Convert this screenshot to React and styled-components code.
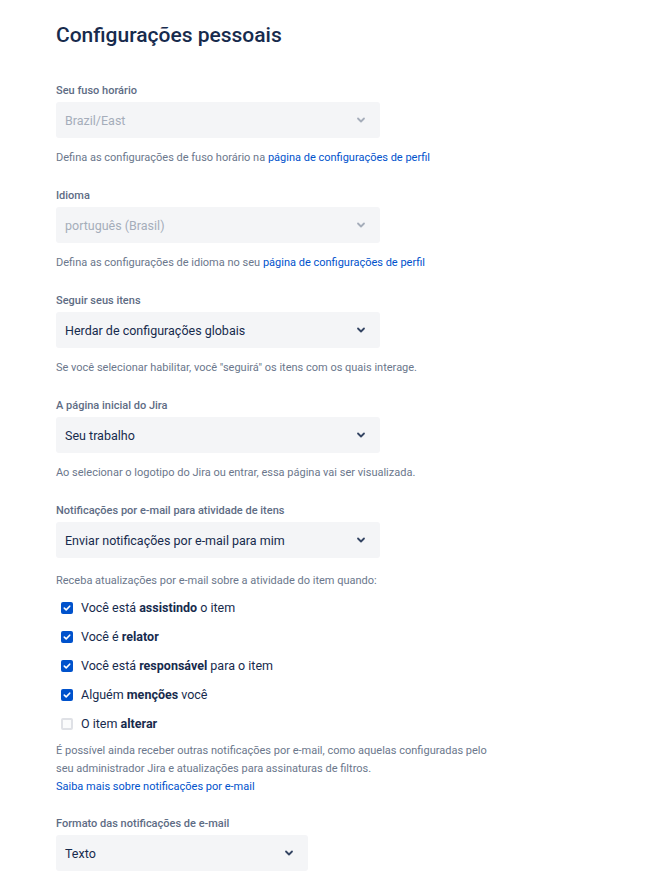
import React from "react";
import styled, { createGlobalStyle } from "styled-components";

const Global = createGlobalStyle`
  html, body { margin: 0; padding: 0; background: #fff; }
  body { font-family: Roboto, "Segoe UI", sans-serif; color: #172B4D; }
`;

const Page = styled.div`
  padding: 20px 56px 18px 56px;
  width: 436px;
`;

const Title = styled.h1`
  margin: 0 0 33px 0;
  font-size: 21px;
  line-height: 30px;
  font-weight: 500;
  color: #172B4D;
`;

const Field = styled.div`
  display: flex;
  flex-direction: column;
  margin-bottom: ${(p) => p.$mb ?? 21}px;
`;

const Label = styled.label`
  font-size: 11px;
  line-height: 16px;
  font-weight: 500;
  color: #5E6C84;
  margin-bottom: 3px;
`;

const SelectBox = styled.div`
  box-sizing: border-box;
  width: ${(p) => p.$w}px;
  height: 36px;
  background: #F4F5F7;
  border-radius: 3px;
  display: flex;
  align-items: center;
  justify-content: space-between;
  padding: 0 14px 0 9px;
  font-size: 12.5px;
  color: ${(p) => (p.$disabled ? "#A5ADBA" : "#172B4D")};
`;

const Helper = styled.div`
  font-size: 11px;
  line-height: 18px;
  color: #6B778C;
  margin-top: ${(p) => p.$mt ?? 11}px;
`;

const Link = styled.a`
  color: #0052CC;
  text-decoration: none;
`;

const CheckList = styled.div`
  display: flex;
  flex-direction: column;
  margin-top: 3px;
`;

const CheckRow = styled.div`
  display: flex;
  align-items: center;
  height: 29px;
  padding-left: 5px;
  font-size: 12.5px;
  color: #172B4D;
  b { font-weight: 700; }
`;

const Box = styled.span`
  box-sizing: border-box;
  width: 12px;
  height: 12px;
  border-radius: 2px;
  margin-right: 8px;
  display: inline-flex;
  align-items: center;
  justify-content: center;
  background: ${(p) => (p.$on ? "#0052CC" : "#FAFBFC")};
  border: ${(p) => (p.$on ? "none" : "2px solid #DFE1E6")};
`;

const Para = styled.div`
  font-size: 11px;
  line-height: 18px;
  color: #6B778C;
  margin-top: 4px;
  margin-bottom: 20px;
`;

const Chevron = ({ disabled }) => (
  <svg width="10" height="10" viewBox="0 0 10 10">
    <path
      d="M2 3.5 L5 6.5 L8 3.5"
      fill="none"
      stroke={disabled ? "#A5ADBA" : "#344563"}
      strokeWidth="1.8"
      strokeLinecap="round"
      strokeLinejoin="round"
    />
  </svg>
);

const Select = ({ value, disabled, w = 324 }) => (
  <SelectBox $disabled={disabled} $w={w}>
    <span>{value}</span>
    <Chevron disabled={disabled} />
  </SelectBox>
);

const Check = ({ on, children }) => (
  <CheckRow>
    <Box $on={on}>
      {on && (
        <svg width="8" height="8" viewBox="0 0 8 8">
          <path d="M1.3 4.1 L3.2 5.9 L6.7 2.2" fill="none" stroke="#fff" strokeWidth="1.6" strokeLinecap="round" strokeLinejoin="round" />
        </svg>
      )}
    </Box>
    <span>{children}</span>
  </CheckRow>
);

export default function App() {
  return (
    <>
      <Global />
      <Page>
        <Title>Configurações pessoais</Title>

        <Field>
          <Label>Seu fuso horário</Label>
          <Select value="Brazil/East" disabled />
          <Helper>
            Defina as configurações de fuso horário na <Link>página de configurações de perfil</Link>
          </Helper>
        </Field>

        <Field>
          <Label>Idioma</Label>
          <Select value="português (Brasil)" disabled />
          <Helper>
            Defina as configurações de idioma no seu <Link>página de configurações de perfil</Link>
          </Helper>
        </Field>

        <Field>
          <Label>Seguir seus itens</Label>
          <Select value="Herdar de configurações globais" />
          <Helper>Se você selecionar habilitar, você "seguirá" os itens com os quais interage.</Helper>
        </Field>

        <Field>
          <Label>A página inicial do Jira</Label>
          <Select value="Seu trabalho" />
          <Helper>Ao selecionar o logotipo do Jira ou entrar, essa página vai ser visualizada.</Helper>
        </Field>

        <Field $mb={0}>
          <Label>Notificações por e-mail para atividade de itens</Label>
          <Select value="Enviar notificações por e-mail para mim" />
          <Helper $mt={14}>Receba atualizações por e-mail sobre a atividade do item quando:</Helper>
          <CheckList>
            <Check on>Você está <b>assistindo</b> o item</Check>
            <Check on>Você é <b>relator</b></Check>
            <Check on>Você está <b>responsável</b> para o item</Check>
            <Check on>Alguém <b>menções</b> você</Check>
            <Check>O item <b>alterar</b></Check>
          </CheckList>
          <Para>
            É possível ainda receber outras notificações por e-mail, como aquelas configuradas pelo seu administrador Jira e atualizações para assinaturas de filtros.
            <br />
            <Link>Saiba mais sobre notificações por e-mail</Link>
          </Para>
        </Field>

        <Field $mb={0}>
          <Label>Formato das notificações de e-mail</Label>
          <Select value="Texto" w={252} />
        </Field>
      </Page>
    </>
  );
}
